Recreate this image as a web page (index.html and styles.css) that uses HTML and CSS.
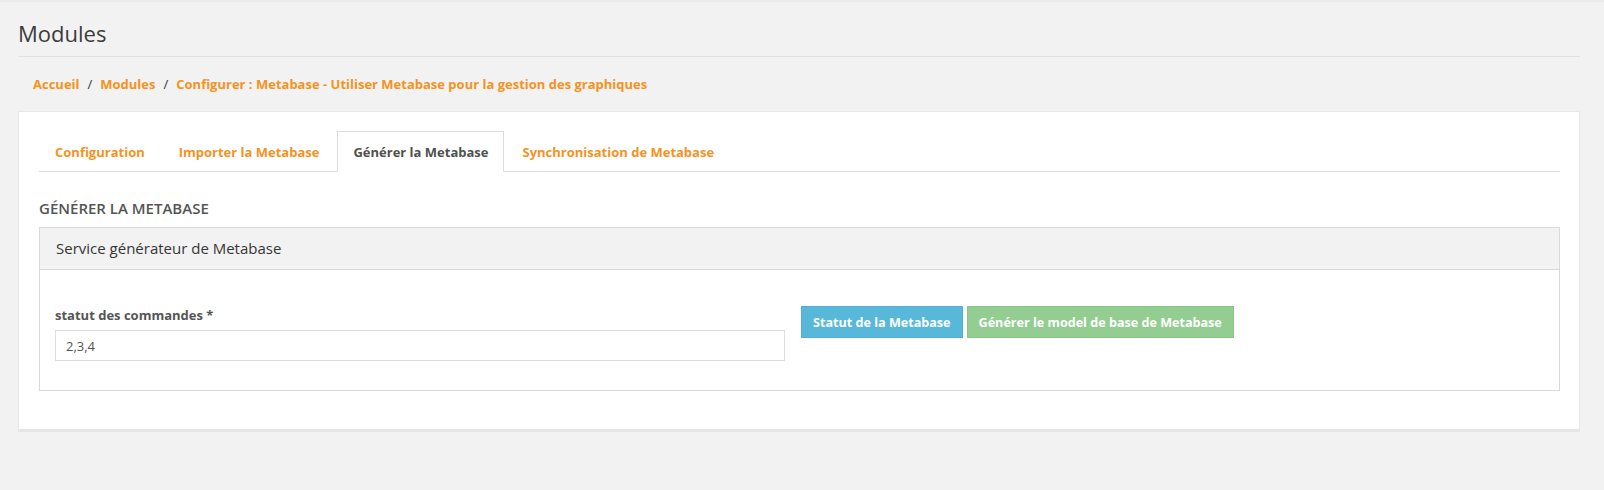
FILE: index.html
```html
<!DOCTYPE html>
<html lang="fr">
<head>
<meta charset="utf-8">
<title>Modules</title>
<link rel="stylesheet" href="styles.css">
</head>
<body>
<div class="topline"></div>
<header class="page-head">
  <h1 class="page-title">Modules</h1>
  <nav class="breadcrumb">
    <a href="#">Accueil</a><span class="sep">/</span><a href="#">Modules</a><span class="sep">/</span><a href="#">Configurer : Metabase - Utiliser Metabase pour la gestion des graphiques</a>
  </nav>
</header>
<main class="card">
  <ul class="tabs">
    <li class="tab"><a href="#">Configuration</a></li>
    <li class="tab"><a href="#">Importer la Metabase</a></li>
    <li class="tab active"><a href="#">Générer la Metabase</a></li>
    <li class="tab"><a href="#">Synchronisation de Metabase</a></li>
  </ul>
  <h2 class="section-title">GÉNÉRER LA METABASE</h2>
  <section class="panel">
    <div class="panel-head">Service générateur de Metabase</div>
    <div class="panel-body">
      <div class="form-col">
        <label class="field-label" for="statut">statut des commandes *</label>
        <input class="field-input" id="statut" type="text" value="2,3,4">
      </div>
      <div class="actions">
        <button class="btn btn-info" type="button">Statut de la Metabase</button>
        <button class="btn btn-success" type="button" disabled>Générer le model de base de Metabase</button>
      </div>
    </div>
  </section>
</main>
</body>
</html>
```
FILE: styles.css
```css
* { box-sizing: border-box; }
html, body { margin: 0; padding: 0; }
body {
  background: #f2f2f2;
  font-family: "Open Sans", "Liberation Sans", sans-serif;
  color: #555;
  width: 1604px;
  height: 490px;
  overflow: hidden;
}
.topline { height: 2px; background: #ebebeb; }
.page-head { padding: 0 24px 0 18px; }
.page-title {
  margin: 0;
  padding-top: 15px;
  height: 55px;
  font-size: 22px;
  font-weight: 400;
  line-height: 32px;
  color: #3c3c3c;
  border-bottom: 1px solid #e1e1e1;
}
.breadcrumb {
  padding: 18px 0 0 15px;
  height: 54px;
  font-size: 13px;
  font-weight: 700;
  line-height: 18px;
}
.breadcrumb a { color: #f6921e; text-decoration: none; }
.breadcrumb .sep { color: #333; font-weight: 400; padding: 0 8px; }
.card {
  margin: 0 24px 0 18px;
  background: #fff;
  border: 1px solid #e8e8e8;
  border-bottom: 3px solid #e6e6e6;
  padding: 19px 19px 38px 20px;
}
.tabs {
  list-style: none;
  margin: 0;
  padding: 0;
  display: flex;
  border-bottom: 1px solid #dcdcdc;
  height: 41px;
}
.tab { margin-right: 2px; margin-bottom: -1px; }
.tab a {
  display: block;
  height: 41px;
  padding: 0 15px;
  border: 1px solid transparent;
  font-size: 13px;
  font-weight: 700;
  line-height: 40px;
  color: #f6921e;
  text-decoration: none;
}
.tab.active a {
  color: #505050;
  background: #fff;
  border-color: #dcdcdc;
  border-bottom-color: #fff;
}
.section-title {
  margin: 0;
  padding-top: 24px;
  height: 55px;
  font-size: 15px;
  font-weight: 600;
  line-height: 24px;
  color: #555;
}
.panel {
  border: 1px solid #d9d9d9;
  background: #fff;
}
.panel-head {
  height: 42px;
  background: #f2f2f2;
  border-bottom: 1px solid #d9d9d9;
  padding: 0 16px;
  font-size: 15px;
  line-height: 40px;
  color: #363636;
}
.panel-body {
  display: flex;
  align-items: flex-start;
  padding: 36px 15px 29px 15px;
}
.form-col { width: 730px; }
.field-label {
  display: block;
  font-size: 13px;
  font-weight: 700;
  line-height: 18px;
  color: #555;
  margin-bottom: 6px;
}
.field-input {
  display: block;
  width: 100%;
  height: 31px;
  border: 1px solid #dcdcdc;
  padding: 0 10px;
  font-family: inherit;
  font-size: 13px;
  color: #555;
  background: #fff;
  outline: none;
}
.actions { display: flex; gap: 4px; margin-left: 16px; }
.btn {
  height: 32px;
  padding: 0 11px;
  border: 1px solid transparent;
  font-family: inherit;
  font-size: 12.6px;
  font-weight: 700;
  color: #fff;
  cursor: pointer;
}
.btn-info { background: #58b8d9; border-color: #4fb0d2; }
.btn-success { background: #93cd92; border-color: #86c585; cursor: default; }
```
